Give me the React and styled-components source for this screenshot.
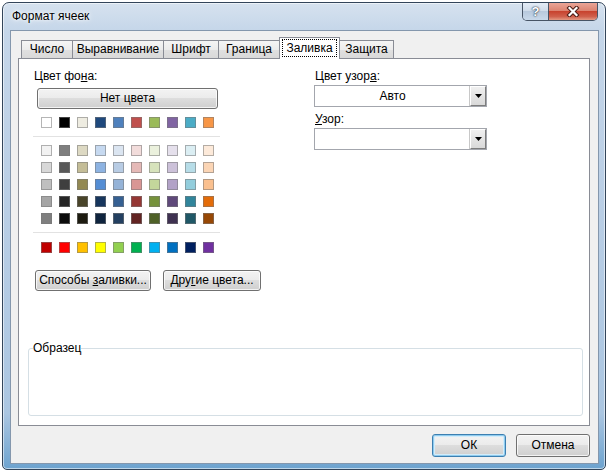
import styled, { createGlobalStyle } from "styled-components";

const BASE = ["#FFFFFF", "#000000", "#EEECE1", "#1F497D", "#4F81BD", "#C0504D", "#9BBB59", "#8064A2", "#4BACC6", "#F79646"];

const SHADES = [
  ["#F2F2F2", "#7F7F7F", "#DDD9C3", "#C6D9F0", "#DBE5F1", "#F2DCDB", "#EBF1DD", "#E5E0EC", "#DBEEF3", "#FDEADA"],
  ["#D8D8D8", "#595959", "#C4BD97", "#8DB3E2", "#B8CCE4", "#E5B9B7", "#D7E3BC", "#CCC1D9", "#B7DDE8", "#FBD5B5"],
  ["#BFBFBF", "#3F3F3F", "#938953", "#548DD4", "#95B3D7", "#D99694", "#C3D69B", "#B2A2C7", "#92CDDC", "#FAC08F"],
  ["#A5A5A5", "#262626", "#494429", "#17365D", "#366092", "#953734", "#76923C", "#5F497A", "#31859B", "#E36C09"],
  ["#7F7F7F", "#0C0C0C", "#1D1B10", "#0F243E", "#244061", "#632423", "#4F6128", "#3F3151", "#205867", "#974806"],
];

const STANDARD = ["#C00000", "#FF0000", "#FFC000", "#FFFF00", "#92D050", "#00B050", "#00B0F0", "#0070C0", "#002060", "#7030A0"];

const TABS = [
  { label: "Число", w: 52 },
  { label: "Выравнивание", w: 92 },
  { label: "Шрифт", w: 56 },
  { label: "Граница", w: 62 },
  { label: "Заливка", w: 61, active: true },
  { label: "Защита", w: 55 },
];

export default function App() {
  return (
    <>
      <Global />
      <Window>
        <TitleBar>
          <Title>Формат ячеек</Title>
          <Caption>
            <HelpBtn>?</HelpBtn>
            <CloseBtn>
              <svg width="14" height="11" viewBox="0 0 14 11">
                <path d="M3.5 2 L10.5 9 M10.5 2 L3.5 9" stroke="#4a1c15" strokeWidth="4.2" strokeLinecap="square" fill="none" />
                <path d="M3.5 2 L10.5 9 M10.5 2 L3.5 9" stroke="#ffffff" strokeWidth="2.2" strokeLinecap="square" fill="none" />
              </svg>
            </CloseBtn>
          </Caption>
        </TitleBar>

        <Client>
          <TabStrip>
            {TABS.map((t) => (
              <Tab key={t.label} $w={t.w} $active={t.active}>
                {t.active ? <Focus>{t.label}</Focus> : t.label}
              </Tab>
            ))}
          </TabStrip>

          <Panel>
            <Columns>
              <Column>
                <Label>Цвет фо<Acc>н</Acc>а:</Label>
                <WideButton>Нет цвета</WideButton>
                <Palette $mt={8}>
                  {BASE.map((c, i) => <Swatch key={i} $c={c} />)}
                </Palette>
                <Divider />
                <Palette>
                  {SHADES.flat().map((c, i) => <Swatch key={i} $c={c} />)}
                </Palette>
                <Divider />
                <Palette $mt={1}>
                  {STANDARD.map((c, i) => <Swatch key={i} $c={c} />)}
                </Palette>
                <ButtonRow>
                  <Button $w={116}>Способы <Acc>з</Acc>аливки...</Button>
                  <Button $w={98}>Дру<Acc>г</Acc>ие цвета...</Button>
                </ButtonRow>
              </Column>

              <Column>
                <Label>Цвет узор<Acc>а</Acc>:</Label>
                <Combo>
                  <ComboText>Авто</ComboText>
                  <DropBtn>
                    <svg width="7" height="4" viewBox="0 0 7 4"><polygon points="0,0 7,0 3.5,4" fill="#000" /></svg>
                  </DropBtn>
                </Combo>
                <Label $mt={5}><Acc>У</Acc>зор:</Label>
                <Combo>
                  <ComboText />
                  <DropBtn>
                    <svg width="7" height="4" viewBox="0 0 7 4"><polygon points="0,0 7,0 3.5,4" fill="#000" /></svg>
                  </DropBtn>
                </Combo>
              </Column>
            </Columns>

            <Sample>
              <legend>Образец</legend>
            </Sample>
          </Panel>

          <Footer>
            <DialogButton $default>ОК</DialogButton>
            <DialogButton>Отмена</DialogButton>
          </Footer>
        </Client>
      </Window>
    </>
  );
}

const Global = createGlobalStyle`
  html, body {
    margin: 0;
    padding: 0;
    background: #ffffff;
  }
  body {
    font-family: "Liberation Sans", Arial, sans-serif;
    font-size: 12px;
    line-height: 15px;
    color: #000;
  }
  * { box-sizing: border-box; }
`;

const Window = styled.div`
  margin: 2px 0 0 2px;
  width: 604px;
  height: 468px;
  border: 1px solid #33455a;
  border-radius: 7px 7px 5px 5px;
  background: linear-gradient(180deg, #d6e2ef 0%, #c5d6e9 6%, #b9cee5 45%, #abc6e1 88%, #6da3cf 100%);
  box-shadow: inset 0 0 0 1px rgba(255, 255, 255, 0.55);
  padding: 0 6px 5px 7px;
  display: flex;
  flex-direction: column;
`;

const TitleBar = styled.div`
  height: 27px;
  display: flex;
  justify-content: space-between;
  align-items: flex-start;
`;

const Title = styled.div`
  padding: 6px 0 0 2px;
  font-size: 12px;
  text-shadow: 0 0 6px #fff, 0 0 3px #fff;
`;

const Caption = styled.div`
  display: flex;
  height: 18px;
  margin-right: 1px;
  border: 1px solid rgba(38, 50, 68, 0.8);
  border-top: none;
  border-radius: 0 0 5px 5px;
  overflow: hidden;
`;

const HelpBtn = styled.div`
  width: 26px;
  display: flex;
  align-items: center;
  justify-content: center;
  border-right: 1px solid rgba(38, 50, 68, 0.8);
  background: linear-gradient(180deg, #e4ecf6 0%, #d0dcea 45%, #b8c9dd 50%, #c9d9ea 100%);
  color: #fff;
  font-weight: bold;
  font-size: 13px;
  text-shadow: 0 0 1px #1f2f42, 0 0 2px #1f2f42;
`;

const CloseBtn = styled.div`
  width: 48px;
  display: flex;
  align-items: center;
  justify-content: center;
  background: linear-gradient(180deg, #eaa597 0%, #dc8472 45%, #c8432f 50%, #d0604c 80%, #e39a84 100%);
`;

const Client = styled.div`
  flex: 1;
  background: #f0f0f0;
  border: 1px solid #8497ad;
  padding: 6px 8px 6px 7px;
  display: flex;
  flex-direction: column;
`;

const TabStrip = styled.div`
  height: 21px;
  display: flex;
  align-items: flex-end;
  padding-left: 4px;
  position: relative;
  z-index: 1;
`;

const Tab = styled.div`
  width: ${(p) => p.$w}px;
  height: ${(p) => (p.$active ? 22 : 18)}px;
  margin-left: -1px;
  margin-bottom: ${(p) => (p.$active ? -1 : 0)}px;
  padding: ${(p) => (p.$active ? "1px 2px 2px 2px" : "0")};
  border: 1px solid #898c95;
  border-bottom: none;
  background: ${(p) =>
    p.$active ? "#ffffff" : "linear-gradient(180deg, #f5f5f5 0%, #ececec 50%, #e0e0e0 51%, #d9d9d9 100%)"};
  display: flex;
  align-items: center;
  justify-content: center;
  position: relative;
  z-index: ${(p) => (p.$active ? 2 : 1)};
`;

const Focus = styled.span`
  flex: 1;
  align-self: stretch;
  display: flex;
  align-items: center;
  justify-content: center;
  border: 1px dotted #000;
`;

const Panel = styled.div`
  flex: 1;
  background: #fff;
  border: 1px solid #898c95;
  padding: 10px 6px 9px 9px;
  display: flex;
  flex-direction: column;
`;

const Columns = styled.div`
  display: grid;
  grid-template-columns: 281px 173px;
  margin-left: 5px;
`;

const Column = styled.div`
  display: flex;
  flex-direction: column;
  align-items: flex-start;
`;

const Label = styled.div`
  height: 15px;
  margin-top: ${(p) => p.$mt || 0}px;
  padding-left: 1px;
`;

const Acc = styled.span`
  text-decoration: underline;
`;

const BaseButton = styled.div`
  height: 21px;
  line-height: 19px;
  text-align: center;
  border: 1px solid #707070;
  border-radius: 3px;
  background: linear-gradient(180deg, #f3f3f3 0%, #ebebeb 49%, #dddddd 50%, #cfcfcf 100%);
  box-shadow: inset 0 0 0 1px rgba(255, 255, 255, 0.75);
  white-space: nowrap;
`;

const WideButton = styled(BaseButton)`
  width: 181px;
  margin: 4px 0 0 4px;
`;

const Palette = styled.div`
  display: grid;
  grid-template-columns: repeat(10, 11px);
  column-gap: 7px;
  row-gap: 6px;
  margin-top: ${(p) => p.$mt || 0}px;
  padding-left: 8px;
`;

const Swatch = styled.div`
  width: 11px;
  height: 11px;
  background: ${(p) => p.$c};
  border: 1px solid rgba(120, 120, 120, 0.55);
`;

const Divider = styled.div`
  width: 187px;
  height: 1px;
  margin: 8px 0;
  background: #e2e2e2;
`;

const ButtonRow = styled.div`
  display: flex;
  gap: 12px;
  margin: 17px 0 0 2px;
`;

const Button = styled(BaseButton)`
  width: ${(p) => p.$w}px;
`;

const Combo = styled.div`
  width: 173px;
  height: 22px;
  margin-top: 1px;
  border: 1px solid #a3a6ad;
  background: #fff;
  display: flex;
`;

const ComboText = styled.div`
  flex: 1;
  display: flex;
  align-items: center;
  justify-content: center;
`;

const DropBtn = styled.div`
  width: 16px;
  display: flex;
  align-items: center;
  justify-content: center;
  border: 1px solid;
  border-color: #ffffff #7d7d7d #7d7d7d #ffffff;
  background: linear-gradient(180deg, #f0f0f0, #d9d9d9);
  box-shadow: -1px 0 0 #c8c8c8;
`;

const Sample = styled.fieldset`
  margin: auto 0 0 0;
  height: 75px;
  min-width: 0;
  padding: 0 4px;
  border: 1px solid #d5dfe5;
  border-radius: 3px;

  legend {
    padding: 0;
    line-height: 15px;
  }
`;

const Footer = styled.div`
  display: flex;
  justify-content: flex-end;
  gap: 10px;
  margin-top: 8px;
`;

const DialogButton = styled(BaseButton)`
  width: 74px;
  height: 23px;
  line-height: 21px;
  border-color: ${(p) => (p.$default ? "#3c7fb1" : "#707070")};
  box-shadow: ${(p) =>
    p.$default
      ? "inset 0 0 0 1px #8fcbee, inset 0 0 0 2px #d3ecfa"
      : "inset 0 0 0 1px rgba(255, 255, 255, 0.75)"};
`;
